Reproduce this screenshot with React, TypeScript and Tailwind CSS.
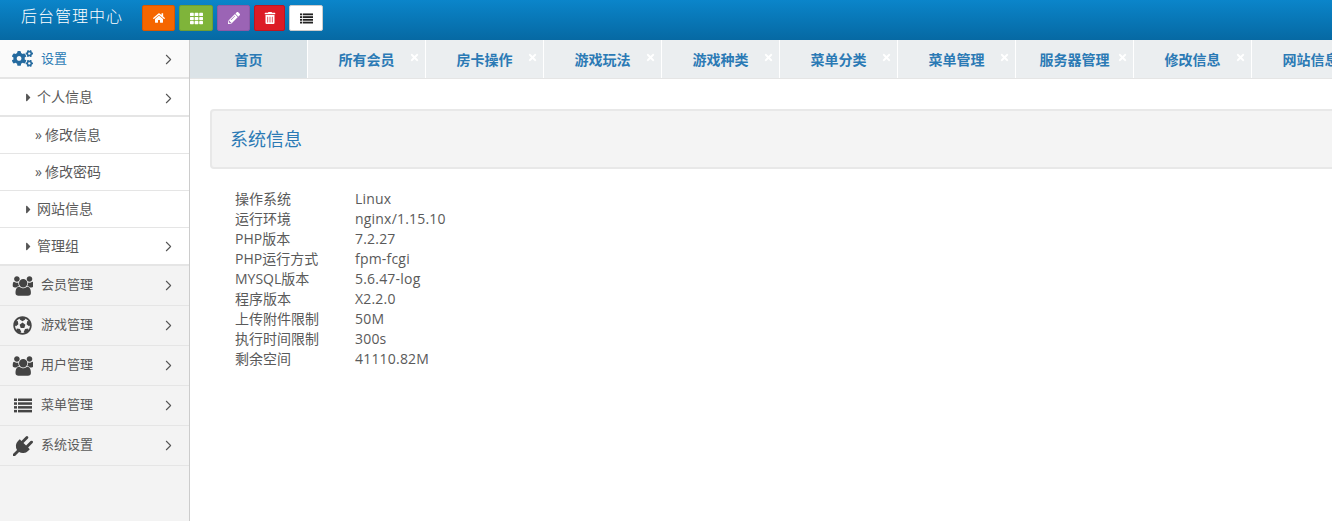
import React from 'react';
import { FaHome, FaTh, FaPencilAlt, FaTrashAlt, FaCogs, FaFutbol, FaCaretRight, FaTimes } from 'react-icons/fa';
import { LuChevronRight } from 'react-icons/lu';

const UsersIcon = () => (
  <svg viewBox="0 0 1920 1792" className="w-[22px] h-[20px]" fill="currentColor">
    <path d="M657 896q-162 5-265 128h-134q-82 0-138-40.5t-56-118.5q0-353 124-353 6 0 43.5 21t97.5 42.5 119 21.5q67 0 133-23-5 37-5 66 0 139 81 256zm1071 637q0 120-73 189.5t-194 69.5h-874q-121 0-194-69.5t-73-189.5q0-53 3.5-103.5t14-109 26.5-108.5 43-97.5 62-81 85.5-53.5 111.5-20q10 0 43 21.5t73 48 107 48 135 21.5 135-21.5 107-48 73-48 43-21.5q61 0 111.5 20t85.5 53.5 62 81 43 97.5 26.5 108.5 14 109 3.5 103.5zm-1024-1277q0 106-75 181t-181 75-181-75-75-181 75-181 181-75 181 75 75 181zm704 384q0 159-112.5 271.5t-271.5 112.5-271.5-112.5-112.5-271.5 112.5-271.5 271.5-112.5 271.5 112.5 112.5 271.5zm576 225q0 78-56 118.5t-138 40.5h-134q-103-123-265-128 81-117 81-256 0-29-5-66 66 23 133 23 59 0 119-21.5t97.5-42.5 43.5-21q124 0 124 353zm-128-609q0 106-75 181t-181 75-181-75-75-181 75-181 181-75 181 75 75 181z" />
  </svg>
);

const PlugIcon = () => (
  <svg viewBox="0 0 1792 1792" className="w-[20px] h-[20px]" fill="currentColor">
    <path d="M1755 453q37 38 37 90.5t-37 90.5l-401 400 150 150-160 160q-163 163-389.5 186.5t-411.5-100.5l-362 362h-181v-181l362-362q-124-185-100.5-411.5t186.5-389.5l160-160 150 150 400-401q38-37 91-37t90 37 37 90.5-37 90.5l-400 401 234 234 401-400q38-37 91-37t90 37z" />
  </svg>
);

// fa4 list: narrow square + long bar per row
const ListIcon = ({ className }: { className: string }) => (
  <svg viewBox="0 0 18 14" className={className} fill="currentColor">
    <rect x="0" y="0" width="3" height="2.5" />
    <rect x="4" y="0" width="14" height="2.5" />
    <rect x="0" y="3.8" width="3" height="2.5" />
    <rect x="4" y="3.8" width="14" height="2.5" />
    <rect x="0" y="7.6" width="3" height="2.5" />
    <rect x="4" y="7.6" width="14" height="2.5" />
    <rect x="0" y="11.4" width="3" height="2.5" />
    <rect x="4" y="11.4" width="14" height="2.5" />
  </svg>
);

const tabs = ['所有会员', '房卡操作', '游戏玩法', '游戏种类', '菜单分类', '菜单管理', '服务器管理', '修改信息', '网站信息'];

const mainMenu = [
  { label: '会员管理', icon: <UsersIcon /> },
  { label: '游戏管理', icon: <FaFutbol className="text-[19px]" /> },
  { label: '用户管理', icon: <UsersIcon /> },
  { label: '菜单管理', icon: <ListIcon className="w-[18px] h-[15px]" /> },
  { label: '系统设置', icon: <PlugIcon /> },
];

const sysInfo = [
  ['操作系统', 'Linux'],
  ['运行环境', 'nginx/1.15.10'],
  ['PHP版本', '7.2.27'],
  ['PHP运行方式', 'fpm-fcgi'],
  ['MYSQL版本', '5.6.47-log'],
  ['程序版本', 'X2.2.0'],
  ['上传附件限制', '50M'],
  ['执行时间限制', '300s'],
  ['剩余空间', '41110.82M'],
];

const Chevron = () => <LuChevronRight className="ml-auto mr-[12px] text-[17px] text-[#555]" strokeWidth={1.5} />;

const ChevronLow = () => <LuChevronRight className="ml-auto mr-[12px] mt-[2px] text-[17px] text-[#555]" strokeWidth={1.5} />;

const Caret = () => <FaCaretRight className="ml-[22px] text-[13px] text-[#555]" />;

const App = () => {
  return (
    <div className="h-screen overflow-hidden bg-white text-[14px] text-[#5a5a5a] font-['Open_Sans','Noto_Sans_CJK_SC',sans-serif]">
      <header className="h-[40px] flex items-center pb-[4px] bg-gradient-to-b from-[#0b85ca] to-[#0669a3]">
        <div className="w-[142px] pl-[21px] pb-[4px] text-[16px] font-light tracking-[1px] text-white">后台管理中心</div>
        <div className="flex gap-[4px]">
          <button className="w-[33px] h-[26px] flex items-center justify-center rounded-[2px] border border-[#d95700] bg-[#f56600] text-white text-[12px]"><FaHome /></button>
          <button className="w-[34px] h-[26px] flex items-center justify-center rounded-[2px] border border-[#6f9f33] bg-[#7fb43a] text-white text-[13px]"><FaTh /></button>
          <button className="w-[33px] h-[26px] flex items-center justify-center rounded-[2px] border border-[#8c5aa6] bg-[#9b64b5] text-white text-[12px]"><FaPencilAlt /></button>
          <button className="w-[31px] h-[26px] flex items-center justify-center rounded-[2px] border border-[#bd1520] bg-[#dc1c26] text-white text-[12px]"><FaTrashAlt /></button>
          <button className="w-[34px] h-[26px] flex items-center justify-center rounded-[2px] border border-[#ccc] bg-white text-[#222]"><ListIcon className="w-[13px] h-[11px]" /></button>
        </div>
      </header>

      <div className="flex h-[481px]">
        <aside className="w-[190px] shrink-0 bg-[#f3f3f3] border-r border-[#ccc]">
          <div className="h-[39px] flex items-center bg-[#fafafa] border-b-2 border-[#e5e5e5] text-[#2b7ab5] text-[13px]">
            <FaCogs className="ml-[12px] w-[21px] text-[21px] text-[#246a9f]" />
            <span className="ml-[8px]">设置</span>
            <ChevronLow />
          </div>
          <div className="h-[38px] flex items-center bg-white border-b-2 border-[#e5e5e5]">
            <Caret />
            <span className="ml-[2px] pb-[2px]">个人信息</span>
            <ChevronLow />
          </div>
          <div className="h-[37px] flex items-center bg-white border-b border-[#e5e5e5]">
            <span className="ml-[35px] w-[10px] pb-[2px]">»</span>
            <span className="pb-[2px]">修改信息</span>
          </div>
          <div className="h-[37px] flex items-center bg-white border-b border-[#e5e5e5]">
            <span className="ml-[35px] w-[10px] pb-[2px]">»</span>
            <span className="pb-[2px]">修改密码</span>
          </div>
          <div className="h-[37px] flex items-center bg-white border-b border-[#e5e5e5]">
            <Caret />
            <span className="ml-[2px] pb-[2px]">网站信息</span>
          </div>
          <div className="h-[38px] flex items-center bg-white border-b-2 border-[#e5e5e5]">
            <Caret />
            <span className="ml-[2px] pb-[2px]">管理组</span>
            <Chevron />
          </div>
          {mainMenu.map((item) => (
            <div key={item.label} className="h-[40px] flex items-center border-b border-[#e5e5e5] text-[13px]">
              <span className="ml-[12px] w-[21px] flex justify-center text-[#444]">{item.icon}</span>
              <span className="ml-[8px] pb-[1px]">{item.label}</span>
              <Chevron />
            </div>
          ))}
        </aside>

        <main className="flex-1 min-w-0 overflow-hidden">
          <div className="flex h-[39px] border-b border-[#e5e5e5] bg-[#ebeef0]">
            <div className="w-[118px] shrink-0 flex items-center justify-center bg-[#dbe3e7] border-r border-white font-bold text-[14px] text-[#2b7ab5]">
              首页
            </div>
            {tabs.map((t) => (
              <div key={t} className="relative w-[118px] shrink-0 flex items-center justify-center border-r border-white font-bold text-[14px] text-[#2b7ab5]">
                <span className="whitespace-nowrap">{t}</span>
                <FaTimes className="absolute right-[5px] top-[12px] text-[11px] text-white" />
              </div>
            ))}
          </div>

          <div className="pl-[20px] pt-[30px]">
            <div className="w-[1300px] h-[60px] flex items-center pl-[18px] bg-[#f4f4f4] border-2 border-[#e8e8e8] rounded-[4px] text-[18px] text-[#2b7ab5]">
              系统信息
            </div>
            <div className="pt-[19px] pl-[25px]">
              {sysInfo.map(([label, value]) => (
                <div key={label} className="flex h-[20px] items-center">
                  <span className="w-[120px]">{label}</span>
                  <span className="tracking-[0.2px]">{value}</span>
                </div>
              ))}
            </div>
          </div>
        </main>
      </div>
    </div>
  );
};

export default App;
